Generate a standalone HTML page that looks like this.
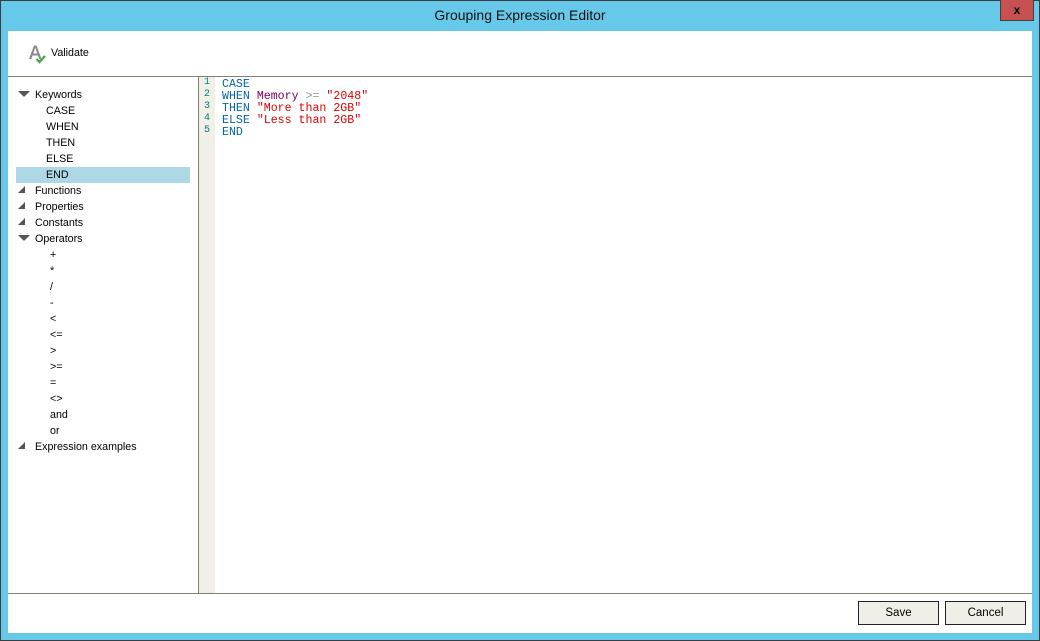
<!DOCTYPE html>
<html><head><meta charset="utf-8"><style>
*{margin:0;padding:0;box-sizing:border-box}
body{width:1040px;height:641px;overflow:hidden;background:#67c9e9;font-family:"Liberation Sans",sans-serif;font-size:10.7px;color:#000;position:relative}
.a{position:absolute}
.frame{left:0;top:0;width:1040px;height:641px;border:1px solid #3c3c3c}
.title{left:0;top:7px;width:1040px;text-align:center;font-size:14px;color:#111}
.close{left:1000px;top:0;width:34px;height:21px;background:#c75050;border:1px solid #4a3a3a;border-top:none;color:#000;font-weight:bold;font-size:12px;text-align:center;line-height:20px}
.main{left:8px;top:31px;width:1024px;height:602px;background:#fff}
.hl{background:#808070;height:1px}
.tree div{position:absolute;white-space:nowrap;line-height:16px}
.code{font-family:"Liberation Mono",monospace;font-size:11.6px;line-height:12px;white-space:pre}
.k{color:#0066aa}.s{color:#e00000}.p{color:#800060}.o{color:#999}
.btn{width:81px;height:24px;border:1px solid #222;background:#efefe7;text-align:center;line-height:22px;font-size:11.5px}
.tri-d{width:0;height:0;border-left:6px solid transparent;border-right:6px solid transparent;border-top:6px solid #555}
.tri-c{width:0;height:0;border-left:7px solid transparent;border-bottom:7px solid #555}
</style></head><body>
<div class="a frame"></div>
<div class="a title">Grouping Expression Editor</div>
<div class="a close">x</div>
<div class="a main"></div>
<svg class="a" style="left:28px;top:44px" width="20" height="20" viewBox="0 0 20 20">
<path d="M1 15 L6 1.5 L8.5 1.5 L13.5 15 L11.2 15 L10 11.5 L4.5 11.5 L3.3 15 Z M5.2 9.5 L9.3 9.5 L7.25 3.8 Z" fill="#8a8a8a"/>
<path d="M8.5 15 L11.5 18 L17 12" stroke="#3aa83a" stroke-width="2.2" fill="none"/>
</svg>
<div class="a" style="left:51px;top:47px;font-size:10.7px">Validate</div>
<div class="a hl" style="left:8px;top:76px;width:1024px"></div>
<div class="a" style="left:198px;top:77px;width:1px;height:516px;background:#808070"></div>
<div class="a" style="left:199px;top:77px;width:16px;height:516px;background:#f0f0e6"></div>
<div class="a hl" style="left:8px;top:593px;width:1024px"></div>
<div class="a" style="left:16px;top:167px;width:174px;height:16px;background:#add8e6"></div>
<div class="tree">
<div class="a tri-d" style="left:18px;top:91px"></div>
<div style="left:35px;top:87px">Keywords</div>
<div style="left:46px;top:103px">CASE</div>
<div style="left:46px;top:119px">WHEN</div>
<div style="left:46px;top:135px">THEN</div>
<div style="left:46px;top:151px">ELSE</div>
<div style="left:46px;top:167px">END</div>
<div class="a tri-c" style="left:18px;top:186px"></div>
<div style="left:35px;top:183px">Functions</div>
<div class="a tri-c" style="left:18px;top:202px"></div>
<div style="left:35px;top:199px">Properties</div>
<div class="a tri-c" style="left:18px;top:218px"></div>
<div style="left:35px;top:215px">Constants</div>
<div class="a tri-d" style="left:18px;top:235px"></div>
<div style="left:35px;top:231px">Operators</div>
<div style="left:50px;top:247px">+</div>
<div style="left:50px;top:263px">*</div>
<div style="left:50px;top:279px">/</div>
<div style="left:50px;top:295px">-</div>
<div style="left:50px;top:311px">&lt;</div>
<div style="left:50px;top:327px">&lt;=</div>
<div style="left:50px;top:343px">&gt;</div>
<div style="left:50px;top:359px">&gt;=</div>
<div style="left:50px;top:375px">=</div>
<div style="left:50px;top:391px">&lt;&gt;</div>
<div style="left:50px;top:407px">and</div>
<div style="left:50px;top:423px">or</div>
<div class="a tri-c" style="left:18px;top:442px"></div>
<div style="left:35px;top:439px">Expression examples</div>
</div>
<div class="a code" style="left:204px;top:77px;color:#008080;font-size:10px">1
2
3
4
5</div>
<div class="a code" style="left:222px;top:79px"><span class="k">CASE</span>
<span class="k">WHEN</span> <span class="p">Memory</span> <span class="o">&gt;=</span> <span class="s">"2048"</span>
<span class="k">THEN</span> <span class="s">"More than 2GB"</span>
<span class="k">ELSE</span> <span class="s">"Less than 2GB"</span>
<span class="k">END</span></div>
<div class="a btn" style="left:858px;top:601px">Save</div>
<div class="a btn" style="left:945px;top:601px">Cancel</div>
</body></html>
